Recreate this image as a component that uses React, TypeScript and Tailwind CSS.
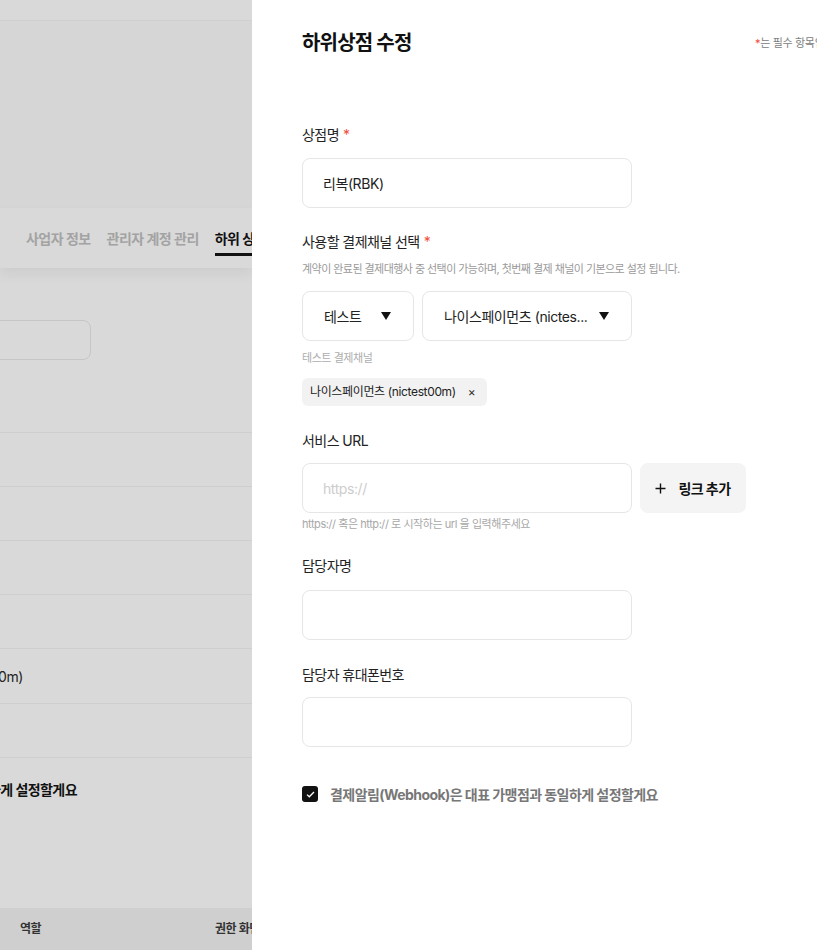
const font = { fontFamily: '"Inter", "Noto Sans CJK KR", sans-serif' }

function Caret() {
  return (
    <svg width="10" height="8" viewBox="0 0 10 8" className="shrink-0">
      <polygon points="0,0 10,0 5,8" fill="#111" />
    </svg>
  )
}

function Label({ text, required, className = "" }: { text: string; required?: boolean; className?: string }) {
  return (
    <div className={`h-5 text-[14px] leading-5 tracking-[-0.04em] text-[#222] ${className}`}>
      {text}
      {required && <span className="ml-1 text-[#f04b3c]">*</span>}
    </div>
  )
}

function TextBox({ value, placeholder, className = "" }: { value?: string; placeholder?: string; className?: string }) {
  return (
    <div className={`flex h-[50px] w-[330px] items-center rounded-lg border border-[#e6e6e6] bg-white px-5 text-[14px] tracking-[-0.03em] ${className}`}>
      {value ? <span className="text-[#222]">{value}</span> : <span className="text-[#cdcdcd]">{placeholder}</span>}
    </div>
  )
}

export default function App() {
  return (
    <div className="flex h-[950px] w-[817px] overflow-hidden" style={font}>
      {/* Background page under the dim overlay */}
      <div className="flex w-[252px] shrink-0 flex-col overflow-hidden bg-[#d9d9d9]">
        <div className="h-[21px] shrink-0 border-b border-[#d0d0d0]" />
        <div className="h-[187px] shrink-0 bg-[#d6d6d6]" />
        <div className="relative z-10 flex h-[60px] shrink-0 items-center gap-4 whitespace-nowrap bg-[#d9d9d9] pl-[26px] text-[14px] font-semibold tracking-[-0.04em] shadow-[0_6px_12px_rgba(0,0,0,0.06)]">
          <span className="shrink-0 text-[#a3a3a3]">사업자 정보</span>
          <span className="shrink-0 text-[#a3a3a3]">관리자 계정 관리</span>
          <span className="flex h-[60px] shrink-0 items-center">
            <span className="border-b-[3px] border-[#111] pb-[4px] pt-[7px] font-bold text-[#111]">하위 상점 관리</span>
          </span>
        </div>
        <div className="flex flex-1 flex-col">
          <div className="mt-[52px] flex w-[91px] justify-end">
            <div className="h-10 w-[200px] shrink-0 rounded-lg border border-[#c6c6c6]" />
          </div>
          <div className="mt-[72px] h-[54px] border-t border-[#cecece]" />
          <div className="h-[54px] border-t border-[#cecece]" />
          <div className="h-[54px] border-t border-[#cecece]" />
          <div className="h-[54px] border-t border-[#cecece]" />
          <div className="flex h-[55px] items-center border-t border-[#cecece]">
            <div className="flex w-[23px] justify-end whitespace-nowrap text-[14px] tracking-[-0.03em] text-[#222]">
              <span className="shrink-0">나이스페이먼츠 (nictest00m)</span>
            </div>
          </div>
          <div className="h-[54px] border-t border-[#cecece]" />
          <div className="h-[150px] border-t border-[#cecece] pt-[21px]">
            <div className="flex w-[77px] justify-end whitespace-nowrap text-[14px] font-bold tracking-[-0.04em] text-[#111]">
              <span className="shrink-0">결제알림(Webhook)은 대표 가맹점과 동일하게 설정할게요</span>
            </div>
          </div>
        </div>
        <div className="flex h-[42px] shrink-0 items-center whitespace-nowrap bg-[#cfcfcf] pl-5 text-[12px] font-semibold tracking-[-0.04em] text-[#333]">
          <span className="w-[195px] shrink-0">역할</span>
          <span className="shrink-0">권한 화면</span>
        </div>
      </div>

      {/* Edit drawer */}
      <div className="w-[640px] shrink-0 bg-white pl-[50px] pt-[29px]">
        <div className="flex h-7 items-center">
          <h1 className="w-[453px] shrink-0 text-[20px] font-bold leading-7 tracking-[-0.04em] text-[#111]">하위상점 수정</h1>
          <span className="whitespace-nowrap text-[11px] tracking-[-0.03em] text-[#808080]">
            <span className="text-[#f04b3c]">*</span>는 필수 항목입니다.
          </span>
        </div>

        <Label text="상점명" required className="mt-[68px]" />
        <TextBox value="리복(RBK)" className="mt-[13px]" />

        <Label text="사용할 결제채널 선택" required className="mt-6" />
        <div className="mt-[9px] h-4 whitespace-nowrap text-[11px] leading-4 tracking-[-0.05em] text-[#9a9a9a]">
          계약이 완료된 결제대행사 중 선택이 가능하며, 첫번째 결제 채널이 기본으로 설정 됩니다.
        </div>
        <div className="mt-[14px] flex gap-2">
          <div className="flex h-[50px] w-[112px] items-center justify-between rounded-lg border border-[#e6e6e6] pl-[21px] pr-[22px] text-[14px] tracking-[-0.03em] text-[#222]">
            <span>테스트</span>
            <Caret />
          </div>
          <div className="flex h-[50px] w-[210px] items-center justify-between rounded-lg border border-[#e6e6e6] pl-[21px] pr-[22px] text-[14px] tracking-[-0.03em] text-[#222]">
            <span className="whitespace-nowrap">나이스페이먼츠 (nictes...</span>
            <Caret />
          </div>
        </div>
        <div className="mt-[9px] h-4 text-[11px] leading-4 tracking-[-0.04em] text-[#adadad]">테스트 결제채널</div>
        <div className="mt-3 inline-flex h-7 items-center rounded-md bg-[#f2f2f2] pl-2 pr-3 text-[12px] tracking-[-0.03em] text-[#222]">
          <span>나이스페이먼츠 (nictest00m)</span>
          <span className="ml-3 text-[12px] text-[#333]">×</span>
        </div>

        <Label text="서비스 URL" className="mt-[25px]" />
        <div className="mt-3 flex gap-2">
          <TextBox placeholder="https://" />
          <button className="flex h-[50px] w-[106px] items-center justify-center gap-3 rounded-lg bg-[#f4f4f4] text-[14px] font-bold tracking-[-0.04em] text-[#111]">
            <svg width="11" height="11" viewBox="0 0 11 11">
              <path d="M5.5 0.5v10M0.5 5.5h10" stroke="#111" strokeWidth="1.4" />
            </svg>
            링크 추가
          </button>
        </div>
        <div className="mt-[3px] h-4 text-[11px] leading-4 tracking-[-0.04em] text-[#a8a8a8]">
          https:// 혹은 http:// 로 시작하는 url 을 입력해주세요
        </div>

        <Label text="담당자명" className="mt-6" />
        <TextBox className="mt-[14px]" />

        <Label text="담당자 휴대폰번호" className="mt-[25px]" />
        <TextBox className="mt-3" />

        <div className="mt-[37px] flex h-5 items-center gap-3">
          <span className="flex h-4 w-4 items-center justify-center rounded-[3px] bg-[#111]">
            <svg width="9" height="7" viewBox="0 0 9 7">
              <path d="M1 3.6l2.3 2.2L8 1" fill="none" stroke="#fff" strokeWidth="1.3" />
            </svg>
          </span>
          <span className="text-[14px] font-bold tracking-[-0.04em] text-[#777]">결제알림(Webhook)은 대표 가맹점과 동일하게 설정할게요</span>
        </div>
      </div>
    </div>
  )
}
